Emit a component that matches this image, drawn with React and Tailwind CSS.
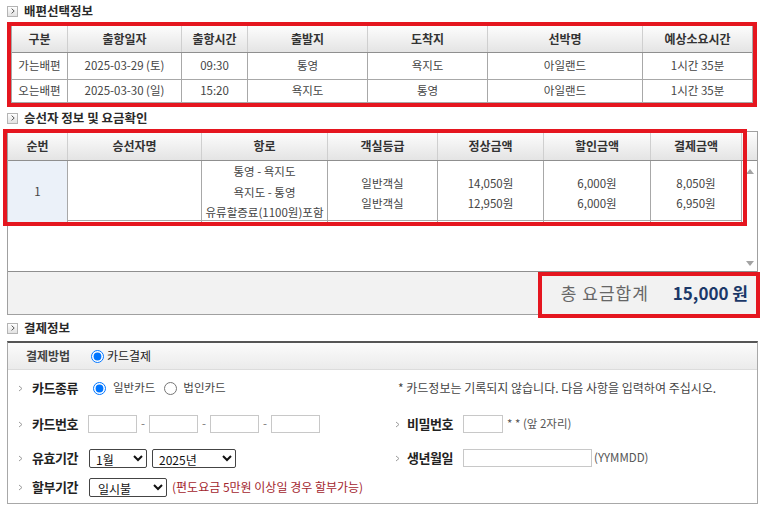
import React from 'react';

const RED = 'border-[#e5161f]';

function SectionTitle({ children, className = '' }) {
    return (
        <div className={`flex items-center gap-[6px] pl-[7px] ${className}`}>
            <span className="flex h-[11px] w-[11px] items-center justify-center border border-[#b4b4b4] bg-linear-to-b from-white to-[#e2e2e2]">
                <svg width="4" height="6" viewBox="0 0 4 6">
                    <path d="M0.6 0.6 L3.2 3 L0.6 5.4" fill="none" stroke="#555" strokeWidth="1" />
                </svg>
            </span>
            <span className="text-[12.5px] font-bold leading-none text-[#2a2a2a]">{children}</span>
        </div>
    );
}

function Chev() {
    return (
        <svg width="5" height="7" viewBox="0 0 5 7" className="shrink-0">
            <path d="M1 1 L4 3.5 L1 6" fill="none" stroke="#9c9c9c" strokeWidth="1" />
        </svg>
    );
}

function Field({ label, lead, children }) {
    return (
        <div className="flex items-center">
            <span className={`flex ${lead}`}><Chev /></span>
            <span className="w-[56px] text-[13px] font-bold tracking-[-0.5px] text-[#222]">{label}</span>
            {children}
        </div>
    );
}

function Radio({ checked }) {
    return <input type="radio" checked={checked} readOnly className="m-0 h-[13px] w-[13px] shrink-0" />;
}

const scheduleHead = ['구분', '출항일자', '출항시간', '출발지', '도착지', '선박명', '예상소요시간'];
const scheduleRows = [
    ['가는배편', '2025-03-29 (토)', '09:30', '통영', '욕지도', '아일랜드', '1시간 35분'],
    ['오는배편', '2025-03-30 (일)', '15:20', '욕지도', '통영', '아일랜드', '1시간 35분'],
];
const fareHead = ['순번', '승선자명', '항로', '객실등급', '정상금액', '할인금액', '결제금액'];

export default function App() {
    return (
        <div className="h-[509px] w-[765px] overflow-hidden bg-white font-['Noto_Sans_CJK_KR',sans-serif] text-[#444]">
            {/* 배편선택정보 */}
            <SectionTitle className="h-[22px]">배편선택정보</SectionTitle>
            <div className={`ml-[7px] w-[750px] border-4 ${RED}`}>
                <div className="border-x border-[#a8a8a8]">
                    <div className="grid h-[27px] grid-cols-[56px_114px_66px_120px_120px_155px_109px] border-b border-[#8f8f8f] bg-linear-to-b from-[#fdfdfd] to-[#e4e4e4]">
                        {scheduleHead.map((h) => (
                            <div key={h} className="flex items-center justify-center border-r border-[#cfcfcf] text-[12px] font-bold text-[#333] last:border-r-0">
                                {h}
                            </div>
                        ))}
                    </div>
                    {scheduleRows.map((row, i) => (
                        <div
                            key={i}
                            className={`grid grid-cols-[56px_114px_66px_120px_120px_155px_109px] border-b border-[#a8a8a8] ${i === 0 ? 'h-[27px]' : 'h-[23px]'}`}
                        >
                            {row.map((c, j) => (
                                <div key={j} className="flex items-center justify-center border-r border-[#a8a8a8] text-[11.5px] text-[#444] last:border-r-0">
                                    {c}
                                </div>
                            ))}
                        </div>
                    ))}
                </div>
            </div>

            {/* 승선자 정보 및 요금확인 */}
            <SectionTitle className="h-[24px] pb-[2px]">승선자 정보 및 요금확인</SectionTitle>
            <div className="relative ml-[7px] w-[751px] border border-[#a0a0a0]">
                <div className="flex h-[29px] border-b border-[#8f8f8f] bg-linear-to-b from-[#fdfdfd] to-[#e4e4e4]">
                    <div className="grid w-[734px] grid-cols-[60px_134px_126px_110px_106px_107px_91px]">
                        {fareHead.map((h) => (
                            <div key={h} className="flex items-center justify-center border-r border-[#cfcfcf] text-[12px] font-bold text-[#333]">
                                {h}
                            </div>
                        ))}
                    </div>
                </div>
                <div className="flex h-[110px]">
                    <div className="w-[734px]">
                        <div className="grid h-[60px] grid-cols-[60px_134px_126px_110px_106px_107px_91px] border-b border-[#a8a8a8] text-[11.5px] text-[#444]">
                            <div className="flex items-center justify-center border-r border-[#a8a8a8] bg-[#ebf1f9]">1</div>
                            <div className="border-r border-[#a8a8a8]"></div>
                            <div className="flex flex-col items-center justify-center border-r border-[#a8a8a8] leading-[20.5px]">
                                <span>통영 - 욕지도</span>
                                <span>욕지도 - 통영</span>
                                <span>유류할증료(1100원)포함</span>
                            </div>
                            {[
                                ['일반객실', '일반객실'],
                                ['14,050원', '12,950원'],
                                ['6,000원', '6,000원'],
                                ['8,050원', '6,950원'],
                            ].map((pair, k) => (
                                <div key={k} className="flex flex-col items-center justify-center border-r border-[#a8a8a8] pt-[3px] leading-[20px]">
                                    <span>{pair[0]}</span>
                                    <span>{pair[1]}</span>
                                </div>
                            ))}
                        </div>
                    </div>
                    {/* scrollbar */}
                    <div className="flex w-[15px] flex-col items-center justify-between pb-[5px] pt-[8px]">
                        <svg width="8" height="5" viewBox="0 0 8 5"><path d="M0 5 L4 0 L8 5 Z" fill="#a3a3a3" /></svg>
                        <svg width="8" height="5" viewBox="0 0 8 5"><path d="M0 0 L8 0 L4 5 Z" fill="#a3a3a3" /></svg>
                    </div>
                </div>
                <div className="flex h-[43px] items-center justify-end gap-[24px] border-t border-[#8f8f8f] bg-[#f2f2f2] pr-[9px]">
                    <span className="text-[17px] tracking-[1px] text-[#666]">총 요금합계</span>
                    <span className="text-[17px] font-bold text-[#1b3868]">15,000 원</span>
                </div>

                {/* annotation boxes */}
                <div className={`pointer-events-none absolute left-[-5px] top-[-3px] h-[97px] w-[744px] border-4 ${RED}`}></div>
                <div className={`pointer-events-none absolute left-[530px] top-[140px] h-[46px] w-[222px] border-4 ${RED}`}></div>
            </div>

            {/* 결제정보 */}
            <SectionTitle className="h-[26px]">결제정보</SectionTitle>
            <div className="mx-[7px] border-x border-b border-t-2 border-[#a8a8a8] border-t-[#555]">
                <div className="flex h-[27px] items-center border-b border-[#dcdcdc] bg-linear-to-b from-[#fbfbfb] to-[#ebebeb] pl-[18px]">
                    <span className="w-[65px] text-[12px] font-bold text-[#444]">결제방법</span>
                    <label className="flex items-center gap-[3px] text-[12px] text-[#222]">
                        <Radio checked />
                        <span>카드결제</span>
                    </label>
                </div>
                <div className="grid grid-cols-[377px_1fr] grid-rows-[36px_36px_32px_26px] pb-[3px] pl-[10px] text-[11.5px]">
                    <Field label="카드종류" lead="w-[14px]">
                        <div className="ml-[5px] flex items-center text-[#444]">
                            <Radio checked />
                            <span className="ml-[7px]">일반카드</span>
                            <span className="ml-[9px] flex"><Radio checked={false} /></span>
                            <span className="ml-[6px]">법인카드</span>
                        </div>
                    </Field>
                    <div className="flex items-center pl-[3px] text-[12px] text-[#444]">
                        * 카드정보는 기록되지 않습니다. 다음 사항을 입력하여 주십시오.
                    </div>

                    <Field label="카드번호" lead="w-[14px]">
                        <div className="flex items-center text-[#777]">
                            <input className="h-[18px] w-[49px] border border-[#c8c8c8]" />
                            <span className="mx-[4px]">-</span>
                            <input className="h-[18px] w-[49px] border border-[#c8c8c8]" />
                            <span className="mx-[4px]">-</span>
                            <input className="h-[18px] w-[49px] border border-[#c8c8c8]" />
                            <span className="mx-[4px]">-</span>
                            <input className="h-[18px] w-[49px] border border-[#c8c8c8]" />
                        </div>
                    </Field>
                    <Field label="비밀번호" lead="w-[12px]">
                        <input className="h-[18px] w-[40px] border border-[#c8c8c8]" />
                        <span className="ml-[4px] text-[#555]">* * (앞 2자리)</span>
                    </Field>

                    <Field label="유효기간" lead="w-[14px]">
                        <div className="ml-[1px] flex items-center gap-[5px]">
                            <select defaultValue="1" className="h-[19px] w-[58px] rounded-[2px] border border-[#444] bg-white pl-[2px] text-[12px] text-[#111]">
                                <option value="1">1월</option>
                            </select>
                            <select defaultValue="2025" className="h-[19px] w-[84px] rounded-[2px] border border-[#444] bg-white pl-[2px] text-[12px] text-[#111]">
                                <option value="2025">2025년</option>
                            </select>
                        </div>
                    </Field>
                    <Field label="생년월일" lead="w-[12px]">
                        <input className="h-[18px] w-[129px] border border-[#c8c8c8]" />
                        <span className="ml-[2px] text-[#555]">(YYMMDD)</span>
                    </Field>

                    <Field label="할부기간" lead="w-[14px]">
                        <div className="ml-[1px] flex items-center">
                            <select defaultValue="0" className="h-[19px] w-[78px] rounded-[2px] border border-[#444] bg-white pl-[4px] text-[12px] text-[#111]">
                                <option value="0">일시불</option>
                            </select>
                            <span className="ml-[5px] text-[12px] text-[#a3262e]">(편도요금 5만원 이상일 경우 할부가능)</span>
                        </div>
                    </Field>
                    <div></div>
                </div>
            </div>
        </div>
    );
}
